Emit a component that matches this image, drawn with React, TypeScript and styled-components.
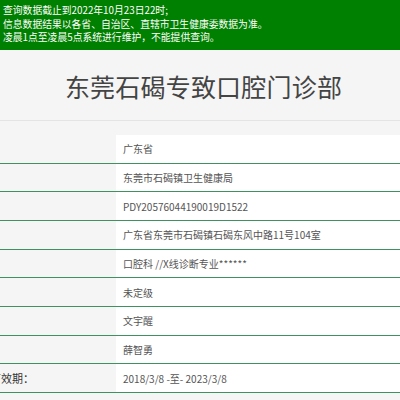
import React from "react";
import styled, { createGlobalStyle } from "styled-components";

const GlobalStyle = createGlobalStyle`
  html, body {
    margin: 0;
    padding: 0;
    background: #f5f5f5;
    font-family: "Noto Sans CJK SC", "Noto Sans", sans-serif;
    overflow: hidden;
  }
`;

const Page = styled.div`
  width: 400px;
  overflow: hidden;
  background: #f5f5f5;
`;

const Notice = styled.div`
  background: #008000;
  color: #ffffff;
  font-size: 9.8px;
  line-height: 13.5px;
  padding: 4px 3px 5.5px 3px;
  height: 50px;
  box-sizing: border-box;
`;

const NoticeLine = styled.div`
  white-space: nowrap;
`;

const Title = styled.h1`
  margin: 0;
  height: 71px;
  box-sizing: border-box;
  border-bottom: 1px solid #e4e4e4;
  display: flex;
  align-items: center;
  justify-content: center;
  padding: 2px 0 0 7px;
  font-size: 25px;
  font-weight: 400;
  color: #444;
  letter-spacing: 0.2px;
`;

const TableWrap = styled.div`
  display: flex;
  justify-content: center;
  padding-top: 14px;
`;

const Table = styled.div`
  width: 544px;
  flex-shrink: 0;
`;

const Row = styled.div`
  display: grid;
  grid-template-columns: 188px 1fr;
  height: 28.67px;
  box-sizing: border-box;
  border-bottom: 1px solid #3f9160;
`;

const Label = styled.div`
  padding-left: 7px;
  display: flex;
  align-items: center;
  font-size: 11px;
  color: #333;
  white-space: nowrap;
  background: #f5f5f5;
`;

const Value = styled.div`
  background: #ffffff;
  padding-left: 7px;
  display: flex;
  align-items: center;
  font-size: 10px;
  color: #555;
  white-space: nowrap;
`;

const rows: [string, string][] = [
  ["所在省份：", "广东省"],
  ["发证机关：", "东莞市石碣镇卫生健康局"],
  ["登记号：", "PDY20576044190019D1522"],
  ["地址：", "广东省东莞市石碣镇石碣东风中路11号104室"],
  ["诊疗科目：", "口腔科 //X线诊断专业******"],
  ["医院等级：", "未定级"],
  ["法人代表：", "文宇醒"],
  ["负责人：", "薛智勇"],
  ["执业许可证有效期：", "2018/3/8 -至- 2023/3/8"],
];

export default function App() {
  return (
    <Page>
      <GlobalStyle />
      <Notice>
        <NoticeLine>查询数据截止到2022年10月23日22时;</NoticeLine>
        <NoticeLine>信息数据结果以各省、自治区、直辖市卫生健康委数据为准。</NoticeLine>
        <NoticeLine>凌晨1点至凌晨5点系统进行维护，不能提供查询。</NoticeLine>
      </Notice>
      <Title>东莞石碣专致口腔门诊部</Title>
      <TableWrap>
        <Table>
          {rows.map(([l, v]) => (
            <Row key={l}>
              <Label>{l}</Label>
              <Value>{v}</Value>
            </Row>
          ))}
        </Table>
      </TableWrap>
    </Page>
  );
}
